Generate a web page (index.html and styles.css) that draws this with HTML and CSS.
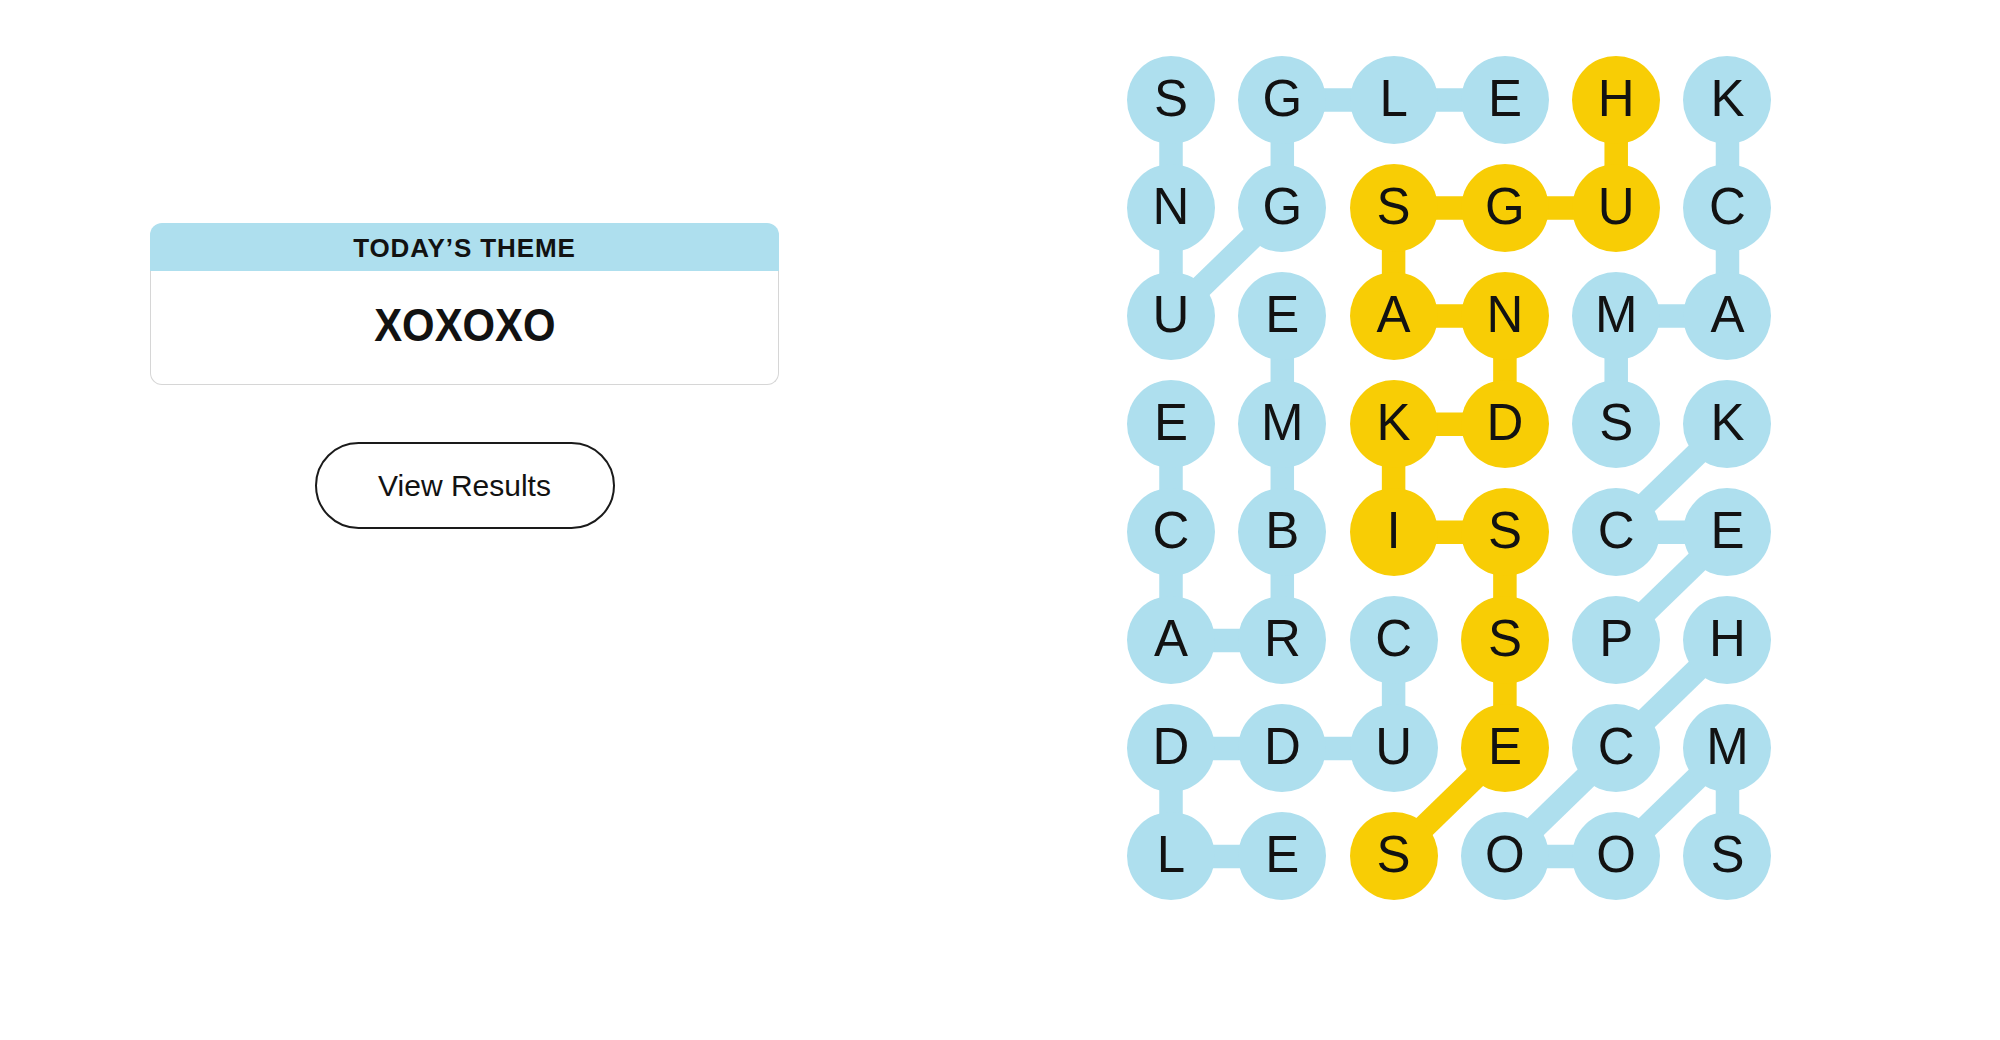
FILE: index.html
```html
<!DOCTYPE html>
<html lang="en">
<head>
<meta charset="utf-8">
<title>Strands</title>
<link rel="stylesheet" href="styles.css">
</head>
<body>
<main class="page">
  <section class="left">
    <div class="theme-card">
      <div class="theme-header">TODAY’S THEME</div>
      <div class="theme-body"><span class="theme-word">XOXOXO</span></div>
    </div>
    <button class="results-btn">View Results</button>
  </section>

  <section class="board">
    <svg class="links" width="645" height="845" viewBox="0 0 645 845" aria-hidden="true">
      <g class="blue">
        <line x1="44" y1="44" x2="44" y2="152.1"/>
        <line x1="44" y1="152.1" x2="44" y2="260.1"/>
        <line x1="44" y1="260.1" x2="155.3" y2="152.1"/>
        <line x1="155.3" y1="152.1" x2="155.3" y2="44"/>
        <line x1="155.3" y1="44" x2="266.6" y2="44"/>
        <line x1="266.6" y1="44" x2="377.9" y2="44"/>

        <line x1="489.2" y1="368.2" x2="489.2" y2="260.1"/>
        <line x1="489.2" y1="260.1" x2="600.5" y2="260.1"/>
        <line x1="600.5" y1="260.1" x2="600.5" y2="152.1"/>
        <line x1="600.5" y1="152.1" x2="600.5" y2="44"/>

        <line x1="489.2" y1="584.4" x2="600.5" y2="476.3"/>
        <line x1="600.5" y1="476.3" x2="489.2" y2="476.3"/>
        <line x1="489.2" y1="476.3" x2="600.5" y2="368.2"/>

        <line x1="600.5" y1="800.5" x2="600.5" y2="692.4"/>
        <line x1="600.5" y1="692.4" x2="489.2" y2="800.5"/>
        <line x1="489.2" y1="800.5" x2="377.9" y2="800.5"/>
        <line x1="377.9" y1="800.5" x2="489.2" y2="692.4"/>
        <line x1="489.2" y1="692.4" x2="600.5" y2="584.4"/>

        <line x1="155.3" y1="260.1" x2="155.3" y2="368.2"/>
        <line x1="155.3" y1="368.2" x2="155.3" y2="476.3"/>
        <line x1="155.3" y1="476.3" x2="155.3" y2="584.4"/>
        <line x1="155.3" y1="584.4" x2="44" y2="584.4"/>
        <line x1="44" y1="584.4" x2="44" y2="476.3"/>
        <line x1="44" y1="476.3" x2="44" y2="368.2"/>

        <line x1="266.6" y1="584.4" x2="266.6" y2="692.4"/>
        <line x1="266.6" y1="692.4" x2="155.3" y2="692.4"/>
        <line x1="155.3" y1="692.4" x2="44" y2="692.4"/>
        <line x1="44" y1="692.4" x2="44" y2="800.5"/>
        <line x1="44" y1="800.5" x2="155.3" y2="800.5"/>
      </g>
      <g class="yellow">
        <line x1="489.2" y1="44" x2="489.2" y2="152.1"/>
        <line x1="489.2" y1="152.1" x2="377.9" y2="152.1"/>
        <line x1="377.9" y1="152.1" x2="266.6" y2="152.1"/>
        <line x1="266.6" y1="152.1" x2="266.6" y2="260.1"/>
        <line x1="266.6" y1="260.1" x2="377.9" y2="260.1"/>
        <line x1="377.9" y1="260.1" x2="377.9" y2="368.2"/>
        <line x1="377.9" y1="368.2" x2="266.6" y2="368.2"/>
        <line x1="266.6" y1="368.2" x2="266.6" y2="476.3"/>
        <line x1="266.6" y1="476.3" x2="377.9" y2="476.3"/>
        <line x1="377.9" y1="476.3" x2="377.9" y2="584.4"/>
        <line x1="377.9" y1="584.4" x2="377.9" y2="692.4"/>
        <line x1="377.9" y1="692.4" x2="266.6" y2="800.5"/>
      </g>
    </svg>

    <div class="grid">
      <div class="cell">S</div><div class="cell">G</div><div class="cell">L</div><div class="cell">E</div><div class="cell on">H</div><div class="cell">K</div>
      <div class="cell">N</div><div class="cell">G</div><div class="cell on">S</div><div class="cell on">G</div><div class="cell on">U</div><div class="cell">C</div>
      <div class="cell">U</div><div class="cell">E</div><div class="cell on">A</div><div class="cell on">N</div><div class="cell">M</div><div class="cell">A</div>
      <div class="cell">E</div><div class="cell">M</div><div class="cell on">K</div><div class="cell on">D</div><div class="cell">S</div><div class="cell">K</div>
      <div class="cell">C</div><div class="cell">B</div><div class="cell on">I</div><div class="cell on">S</div><div class="cell">C</div><div class="cell">E</div>
      <div class="cell">A</div><div class="cell">R</div><div class="cell">C</div><div class="cell on">S</div><div class="cell">P</div><div class="cell">H</div>
      <div class="cell">D</div><div class="cell">D</div><div class="cell">U</div><div class="cell on">E</div><div class="cell">C</div><div class="cell">M</div>
      <div class="cell">L</div><div class="cell">E</div><div class="cell on">S</div><div class="cell">O</div><div class="cell">O</div><div class="cell">S</div>
    </div>
  </section>
</main>
</body>
</html>
```

FILE: styles.css
```css
* { box-sizing: border-box; }

html, body {
  margin: 0;
  padding: 0;
  background: #ffffff;
}

body {
  font-family: "Liberation Sans", Arial, sans-serif;
  color: #121212;
}

.page {
  display: flex;
  align-items: flex-start;
  padding: 56px 0 0 150px;
}

.left {
  width: 629px;
  padding-top: 167px;
  display: flex;
  flex-direction: column;
  align-items: center;
}

.theme-card {
  width: 629px;
  display: flex;
  flex-direction: column;
}

.theme-header {
  height: 48px;
  background: #aedfee;
  border-radius: 12px 12px 0 0;
  display: flex;
  align-items: center;
  justify-content: center;
  padding-top: 2px;
  font-size: 26px;
  font-weight: 700;
  letter-spacing: 0.9px;
  line-height: 1;
}

.theme-body {
  height: 114px;
  border: 1px solid #d6d6d6;
  border-top: none;
  border-radius: 0 0 12px 12px;
  display: flex;
  align-items: center;
  justify-content: center;
  padding-bottom: 6px;
}

.theme-word {
  display: inline-block;
  font-size: 47px;
  font-weight: 700;
  line-height: 1;
  transform: scaleX(0.89);
}

.results-btn {
  margin-top: 57px;
  width: 300px;
  height: 87px;
  border: 2px solid #1a1a1a;
  border-radius: 44px;
  background: #ffffff;
  color: #121212;
  font-family: "Liberation Sans", Arial, sans-serif;
  font-size: 30px;
  line-height: 1;
  padding: 0;
}

.board {
  position: relative;
  margin-left: 348px;
  width: 645px;
  height: 845px;
}

.links {
  position: absolute;
  left: 0;
  top: 0;
}

.links line {
  stroke-width: 23.5;
  stroke-linecap: butt;
}

.links .blue line { stroke: #aedfee; }
.links .yellow line { stroke: #f8cd05; }

.grid {
  position: relative;
  display: grid;
  grid-template-columns: repeat(6, 88px);
  grid-auto-rows: 88px;
  column-gap: 23.3px;
  row-gap: 20.07px;
}

.cell {
  width: 88px;
  height: 88px;
  border-radius: 50%;
  background: #aedfee;
  display: flex;
  align-items: center;
  justify-content: center;
  padding-bottom: 3px;
  font-size: 51px;
  line-height: 1;
  color: #121212;
}

.cell.on {
  background: #f8cd05;
}
```
